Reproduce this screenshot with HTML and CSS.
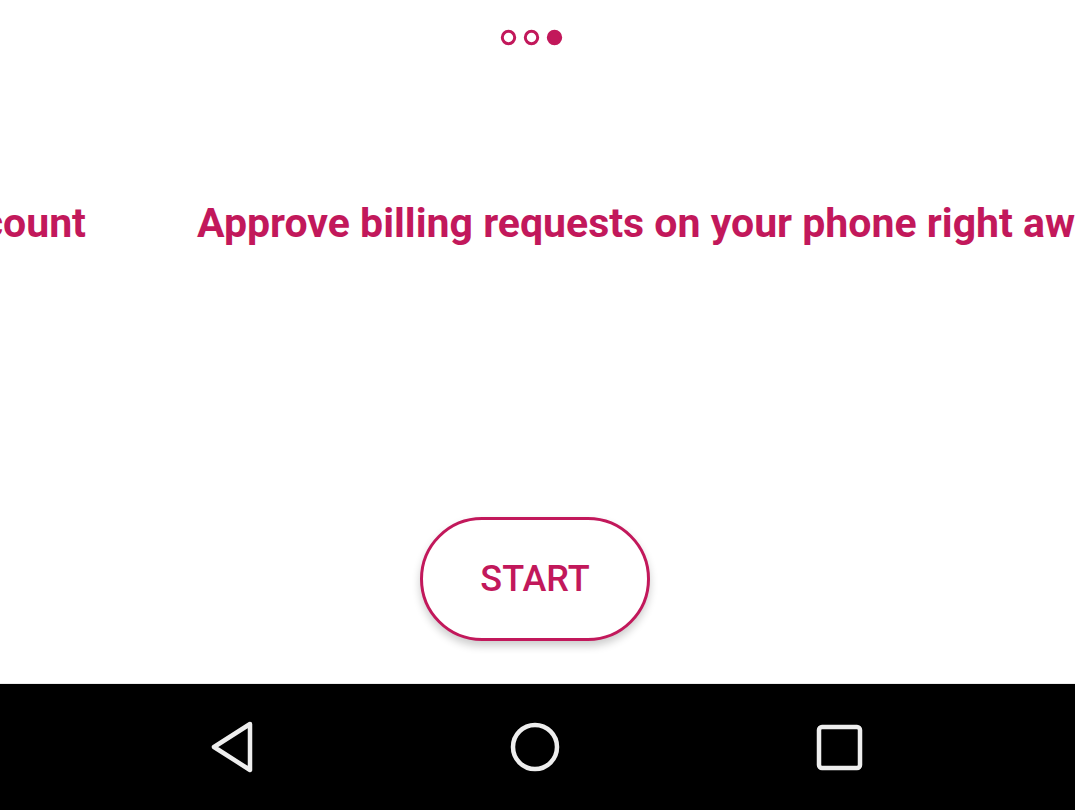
FILE: index.html
```html
<!DOCTYPE html>
<html lang="en">
<head>
<meta charset="utf-8">
<title>Onboarding</title>
<link rel="stylesheet" href="styles.css">
</head>
<body>
<div class="screen">
  <main class="content">
    <div class="dots">
      <svg class="dot" width="17" height="17" viewBox="0 0 17 17"><circle cx="8.5" cy="8.5" r="6.2" fill="none" stroke="#c2185b" stroke-width="3"/></svg>
      <svg class="dot" width="17" height="17" viewBox="0 0 17 17"><circle cx="8.5" cy="8.5" r="6.2" fill="none" stroke="#c2185b" stroke-width="3"/></svg>
      <svg class="dot" width="17" height="17" viewBox="0 0 17 17"><circle cx="8.5" cy="8.5" r="6.2" fill="#c2185b" stroke="#c2185b" stroke-width="3"/></svg>
    </div>
    <div class="carousel">
      <div class="slide-prev"><span>Connect your account</span></div>
      <div class="slide-current">Approve billing requests on your phone right away</div>
    </div>
    <div class="actions">
      <button class="start-btn" type="button">START</button>
    </div>
  </main>
  <nav class="navbar">
    <svg width="48" height="56" viewBox="0 0 48 56"><polygon points="43,5 7,28 43,51" fill="none" stroke="#eeeeee" stroke-width="4.5" stroke-linejoin="round"/></svg>
    <svg width="56" height="56" viewBox="0 0 56 56"><circle cx="28" cy="28" r="22" fill="none" stroke="#eeeeee" stroke-width="4.5"/></svg>
    <svg width="48" height="48" viewBox="0 0 48 48"><rect x="4" y="4" width="41" height="41" rx="3" fill="none" stroke="#eeeeee" stroke-width="4.5"/></svg>
  </nav>
</div>
</body>
</html>
```
FILE: styles.css
```css
html, body {
  margin: 0;
  padding: 0;
  background: #ffffff;
}
body {
  font-family: Roboto, "Liberation Sans", Arial, sans-serif;
}
.screen {
  width: 1075px;
  height: 810px;
  display: flex;
  flex-direction: column;
  overflow: hidden;
}
.content {
  height: 684px;
  display: flex;
  flex-direction: column;
  background: #ffffff;
  border-bottom: 1px solid #ececec;
  box-sizing: border-box;
}
.dots {
  margin-top: 29px;
  height: 17px;
  display: flex;
  justify-content: center;
  gap: 6px;
  padding-right: 13px;
}
.dot {
  display: block;
}
.carousel {
  margin-top: 153px;
  height: 48px;
  display: flex;
  overflow: hidden;
  color: #c2185b;
  font-size: 41px;
  font-weight: 700;
  line-height: 48px;
  white-space: nowrap;
}
.slide-prev {
  width: 86px;
  flex-shrink: 0;
  display: flex;
  justify-content: flex-end;
  overflow: hidden;
}
.slide-prev span {
  flex-shrink: 0;
}
.slide-current {
  margin-left: 111px;
  flex-shrink: 0;
}
.actions {
  margin-top: 270px;
  display: flex;
  justify-content: center;
  padding-right: 5px;
}
.start-btn {
  width: 230px;
  height: 124px;
  border: 3px solid #c2185b;
  border-radius: 62px;
  background: #ffffff;
  color: #c2185b;
  font-family: Roboto, "Liberation Sans", Arial, sans-serif;
  font-size: 36px;
  font-weight: 500;
  box-shadow: 0 5px 8px rgba(0, 0, 0, 0.2);
  padding: 0;
  cursor: pointer;
}
.navbar {
  height: 126px;
  background: #000000;
  display: flex;
  align-items: center;
  justify-content: center;
  gap: 252px;
  padding-right: 5px;
}
.navbar svg {
  display: block;
}
```
